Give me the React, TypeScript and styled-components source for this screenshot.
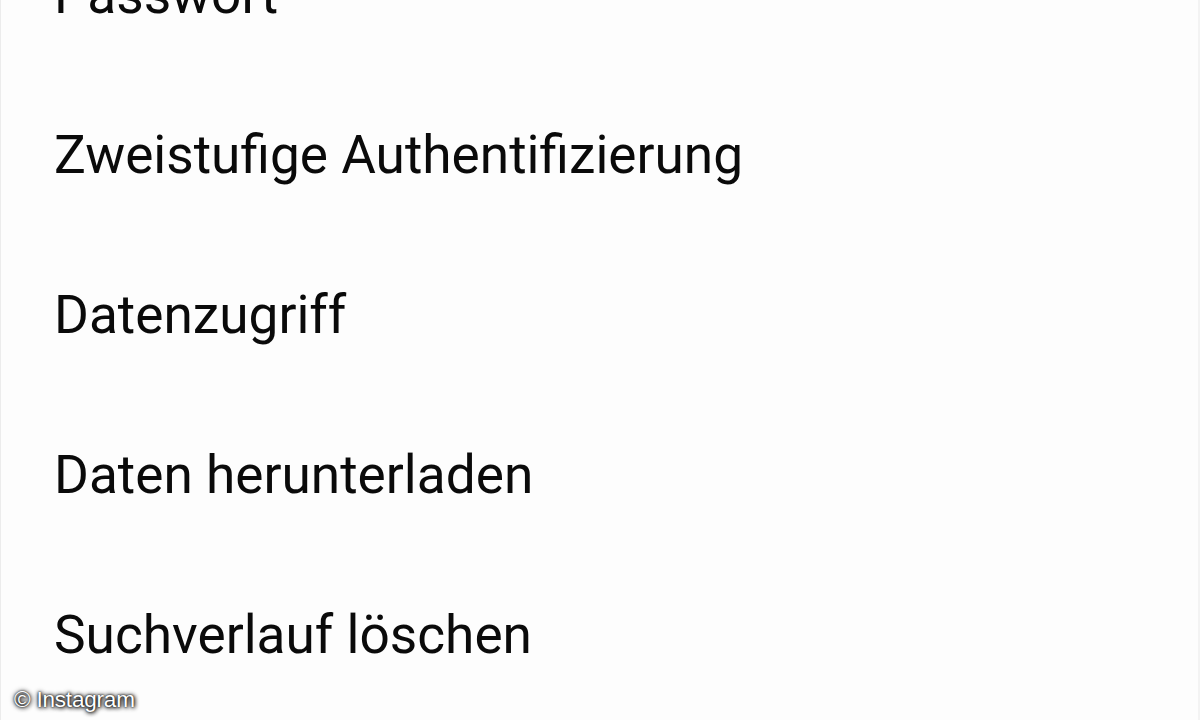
import { FC } from "react";
import styled, { createGlobalStyle } from "styled-components";

const GlobalStyle = createGlobalStyle`
  html, body {
    margin: 0;
    padding: 0;
    background: #fdfdfd;
  }
  body {
    font-family: Roboto, "Noto Sans", sans-serif;
  }
`;

const items = [
  "Passwort",
  "Zweistufige Authentifizierung",
  "Datenzugriff",
  "Daten herunterladen",
  "Suchverlauf löschen",
];

const Screen = styled.div`
  position: relative;
  width: 1200px;
  height: 720px;
  overflow: hidden;
  background: #fdfdfd;
  border-left: 1px solid #ececec;
  border-right: 2px solid #f3f3f3;
  box-sizing: border-box;
`;

const Menu = styled.ul`
  list-style: none;
  margin: -85px 0 0;
  padding: 0;
`;

const Row = styled.li`
  height: 160px;
  line-height: 160px;
  padding-left: 53px;
  font-size: 53.2px;
  color: #0a0a0a;
  white-space: nowrap;
`;

// photo credit sitting over the bottom-left corner
const Credit = styled.div`
  position: absolute;
  left: 13px;
  bottom: 8px;
  font-family: "Liberation Sans", Arial, sans-serif;
  font-size: 22.5px;
  line-height: 24px;
  color: #ffffff;
  text-shadow: 0 0 2px #000, 0 0 5px rgba(0, 0, 0, 0.9), 1px 1px 4px #000;
  letter-spacing: -0.2px;
`;

const App: FC = () => {
  return (
    <>
      <GlobalStyle />
      <Screen>
        <Menu>
          {items.map((label) => (
            <Row key={label}>{label}</Row>
          ))}
        </Menu>
        <Credit>© Instagram</Credit>
      </Screen>
    </>
  );
};

export default App;
